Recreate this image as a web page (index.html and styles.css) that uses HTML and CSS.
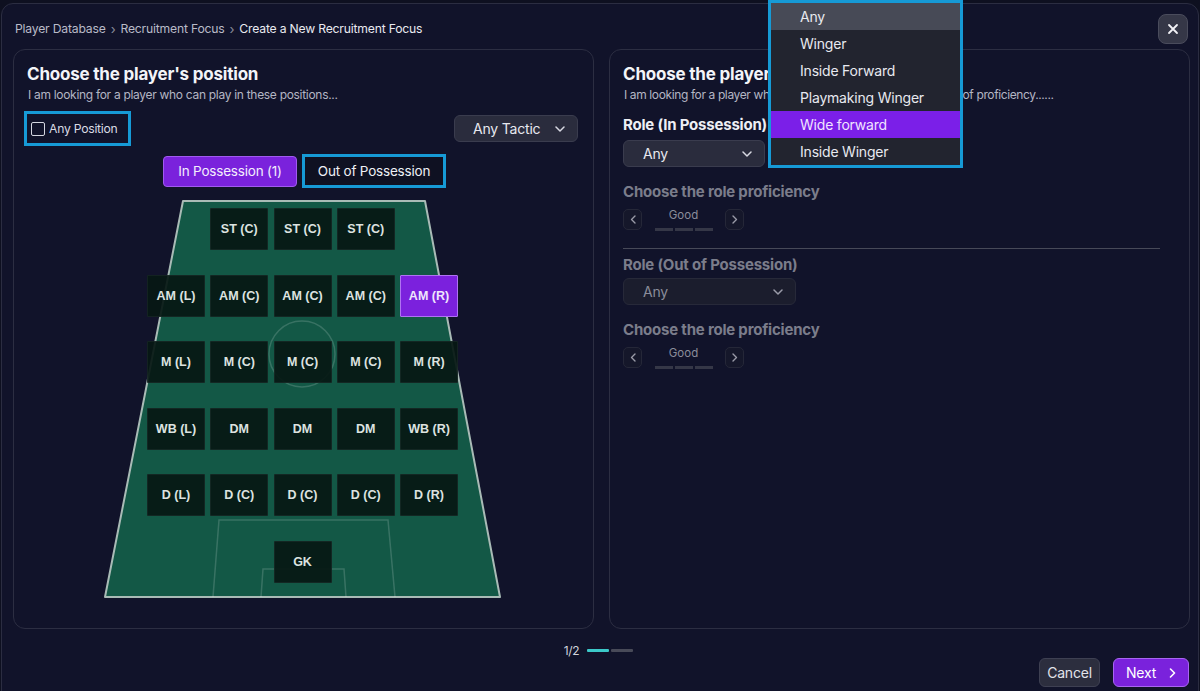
FILE: index.html
```html
<!DOCTYPE html>
<html lang="en">
<head>
<meta charset="utf-8">
<title>Create a New Recruitment Focus</title>
<link rel="stylesheet" href="styles.css">
</head>
<body>
<div class="modal">
  <header class="topbar">
    <nav class="crumbs">
      <span class="crumb">Player Database</span>
      <span class="sep">›</span>
      <span class="crumb">Recruitment Focus</span>
      <span class="sep">›</span>
      <span class="crumb current">Create a New Recruitment Focus</span>
    </nav>
    <button class="close" aria-label="Close">
      <svg width="12" height="12" viewBox="0 0 12 12"><path d="M2 2 L10 10 M10 2 L2 10" stroke="#f2f2f6" stroke-width="1.8" stroke-linecap="round"/></svg>
    </button>
  </header>

  <main class="panels">
    <section class="panel">
      <h2 class="title">Choose the player's position</h2>
      <p class="sub">I am looking for a player who can play in these positions...</p>
      <div class="filters">
        <label class="anypos hl"><span class="box"></span>Any Position</label>
        <button class="select tactic">Any Tactic
          <svg width="10" height="6" viewBox="0 0 10 6"><path d="M1 1 L5 5 L9 1" fill="none" stroke="#d8d9e2" stroke-width="1.5" stroke-linecap="round" stroke-linejoin="round"/></svg>
        </button>
      </div>
      <div class="tabs">
        <button class="tab active">In Possession (1)</button>
        <button class="tab hl">Out of Possession</button>
      </div>
      <div class="pitch">
        <svg class="pitch-lines" width="397" height="398" viewBox="0 0 397 398">
          <polygon points="79,1 321,1 396,397 1,397" fill="#135846" stroke="#a9bbb6" stroke-width="2" stroke-linejoin="round"/>
          <circle cx="198" cy="154" r="33" fill="none" stroke="rgba(255,255,255,0.16)" stroke-width="1.5"/>
          <polyline points="109,397 115,320 284,320 291,397" fill="none" stroke="rgba(255,255,255,0.16)" stroke-width="1.5"/>
          <polyline points="157,397 159,369 240,369 242,397" fill="none" stroke="rgba(255,255,255,0.16)" stroke-width="1.5"/>
        </svg>
        <div class="tiles">
          <div class="tile c2">ST (C)</div>
          <div class="tile">ST (C)</div>
          <div class="tile">ST (C)</div>

          <div class="tile c1">AM (L)</div>
          <div class="tile">AM (C)</div>
          <div class="tile">AM (C)</div>
          <div class="tile">AM (C)</div>
          <div class="tile sel">AM (R)</div>

          <div class="tile">M (L)</div>
          <div class="tile">M (C)</div>
          <div class="tile">M (C)</div>
          <div class="tile">M (C)</div>
          <div class="tile">M (R)</div>

          <div class="tile">WB (L)</div>
          <div class="tile">DM</div>
          <div class="tile">DM</div>
          <div class="tile">DM</div>
          <div class="tile">WB (R)</div>

          <div class="tile">D (L)</div>
          <div class="tile">D (C)</div>
          <div class="tile">D (C)</div>
          <div class="tile">D (C)</div>
          <div class="tile">D (R)</div>

          <div class="tile c3">GK</div>
        </div>
      </div>
    </section>

    <section class="panel">
      <h2 class="title">Choose the player's role</h2>
      <p class="sub tight">I am looking for a player who can play these roles with this level of proficiency......</p>

      <h3 class="label first">Role (In Possession)</h3>
      <button class="select role">Any
        <svg width="10" height="6" viewBox="0 0 10 6"><path d="M1 1 L5 5 L9 1" fill="none" stroke="#d8d9e2" stroke-width="1.5" stroke-linecap="round" stroke-linejoin="round"/></svg>
      </button>

      <h3 class="label dim">Choose the role proficiency</h3>
      <div class="stepper">
        <button class="step"><svg width="6" height="9" viewBox="0 0 6 9"><path d="M5 1 L1.5 4.5 L5 8" fill="none" stroke="#9a9ba8" stroke-width="1.4" stroke-linecap="round" stroke-linejoin="round"/></svg></button>
        <div class="level"><span>Good</span><div class="dashes"><i></i><i></i><i></i></div></div>
        <button class="step"><svg width="6" height="9" viewBox="0 0 6 9"><path d="M1 1 L4.5 4.5 L1 8" fill="none" stroke="#9a9ba8" stroke-width="1.4" stroke-linecap="round" stroke-linejoin="round"/></svg></button>
      </div>

      <hr class="divider">

      <h3 class="label dim top">Role (Out of Possession)</h3>
      <button class="select role wide dimsel">Any
        <svg width="10" height="6" viewBox="0 0 10 6"><path d="M1 1 L5 5 L9 1" fill="none" stroke="#9a9ba8" stroke-width="1.5" stroke-linecap="round" stroke-linejoin="round"/></svg>
      </button>

      <h3 class="label dim">Choose the role proficiency</h3>
      <div class="stepper">
        <button class="step"><svg width="6" height="9" viewBox="0 0 6 9"><path d="M5 1 L1.5 4.5 L5 8" fill="none" stroke="#9a9ba8" stroke-width="1.4" stroke-linecap="round" stroke-linejoin="round"/></svg></button>
        <div class="level"><span>Good</span><div class="dashes"><i></i><i></i><i></i></div></div>
        <button class="step"><svg width="6" height="9" viewBox="0 0 6 9"><path d="M1 1 L4.5 4.5 L1 8" fill="none" stroke="#9a9ba8" stroke-width="1.4" stroke-linecap="round" stroke-linejoin="round"/></svg></button>
      </div>
    </section>
  </main>

  <footer class="footer">
    <div class="pager">
      <span>1/2</span>
      <div class="bars"><i class="on"></i><i></i></div>
    </div>
    <div class="actions">
      <button class="btn cancel">Cancel</button>
      <button class="btn next">Next
        <svg width="7" height="10" viewBox="0 0 7 10"><path d="M1.5 1 L5.5 5 L1.5 9" fill="none" stroke="#ffffff" stroke-width="1.6" stroke-linecap="round" stroke-linejoin="round"/></svg>
      </button>
    </div>
  </footer>
</div>

<ul class="menu">
  <li class="hover">Any</li>
  <li>Winger</li>
  <li>Inside Forward</li>
  <li>Playmaking Winger</li>
  <li class="chosen">Wide forward</li>
  <li>Inside Winger</li>
</ul>
</body>
</html>
```

FILE: styles.css
```css
* { box-sizing: border-box; }

html, body {
  margin: 0;
  padding: 0;
  height: 100%;
  overflow: hidden;
}

body {
  background: #0e1020;
  font-family: Inter, "Noto Sans", "Liberation Sans", sans-serif;
  color: #eceef4;
  position: relative;
}

button {
  font-family: inherit;
  cursor: pointer;
}

.modal {
  margin: 3px 1px 0 1px;
  height: 720px;
  border: 1px solid #2b2d41;
  border-radius: 12px;
  background: #11132a;
}

/* top bar */
.topbar {
  display: flex;
  justify-content: space-between;
  align-items: center;
  padding: 4px 10px 0 13px;
  height: 45px;
}

.crumbs {
  display: flex;
  align-items: center;
  gap: 5px;
  font-size: 12.2px;
  letter-spacing: -0.2px;
}

.crumb { color: #b9bbc8; }
.crumb.current { color: #e9eaf0; }
.sep { color: #8a8c9a; font-size: 13px; }

.close {
  width: 30px;
  height: 30px;
  border-radius: 8px;
  border: 1px solid #4a4c5c;
  background: #353747;
  display: grid;
  place-items: center;
  padding: 0;
}

/* panels */
.panels {
  display: grid;
  grid-template-columns: 581px 581px;
  column-gap: 15px;
  padding: 0 0 0 11px;
}

.panel {
  height: 580px;
  border: 1px solid #2c2e42;
  border-radius: 12px;
  background: #11132a;
  padding: 14px 13px 0 13px;
  position: relative;
}

.title {
  margin: 0;
  font-size: 17px;
  line-height: 20px;
  font-weight: 700;
  color: #f3f4f8;
  letter-spacing: -0.2px;
}

.sub {
  margin: 3px 0 0 1px;
  font-size: 12px;
  line-height: 15px;
  color: #b4b6c4;
  letter-spacing: -0.3px;
  white-space: nowrap;
}

.sub.tight { letter-spacing: -0.38px; }

/* left filters */
.filters {
  display: flex;
  justify-content: space-between;
  align-items: center;
  margin: 9px 2px 0 -3px;
}

.hl {
  border: 3px solid #169ad6;
}

.anypos {
  display: flex;
  align-items: center;
  gap: 4px;
  width: 107px;
  height: 35px;
  padding-left: 4px;
  font-size: 12.2px;
  color: #d9dbe4;
  letter-spacing: -0.25px;
}

.box {
  width: 14px;
  height: 14px;
  border: 1.5px solid #d4d6e0;
  border-radius: 2px;
}

.select {
  display: flex;
  align-items: center;
  justify-content: space-between;
  height: 27px;
  border: 1px solid #3a3c4e;
  border-radius: 6px;
  background: #2a2c3d;
  color: #e7e8ef;
  font-size: 14px;
  letter-spacing: -0.2px;
}

.tactic {
  width: 124px;
  padding: 0 12px 0 18px;
}

/* tabs */
.tabs {
  display: flex;
  justify-content: center;
  align-items: center;
  gap: 5px;
  margin-top: 8px;
  padding-left: 2px;
}

.tab {
  height: 31px;
  border: 1px solid #a15af0;
  border-radius: 4px;
  background: #7a22dc;
  color: #f3eefc;
  font-size: 13.5px;
  letter-spacing: -0.2px;
  padding: 0;
  white-space: nowrap;
}

.tab.active { width: 134px; }

.tab.hl {
  height: 34px;
  width: 144px;
  border: 3px solid #169ad6;
  border-radius: 0;
  background: #0f1122;
  color: #eef0f5;
}

/* pitch */
.pitch {
  position: relative;
  width: 397px;
  height: 398px;
  margin: 12px auto 0;
  left: -1px;
  padding: 8px 43px 0 43px;
}

.pitch-lines {
  position: absolute;
  left: 0;
  top: 0;
}

.tiles {
  position: relative;
  display: grid;
  grid-template-columns: repeat(5, 58px);
  grid-auto-rows: 42px;
  column-gap: 5.25px;
  row-gap: 24.5px;
}

.tile {
  display: grid;
  place-items: center;
  background: rgba(6, 24, 19, 0.93);
  border: 1px solid rgba(255, 255, 255, 0.05);
  border-radius: 1px;
  font-family: "Liberation Sans", Arial, sans-serif;
  font-weight: 700;
  font-size: 12.5px;
  color: #dde3e0;
}

.tile.c1 { grid-column-start: 1; }
.tile.c2 { grid-column-start: 2; }
.tile.c3 { grid-column-start: 3; }

.tile.sel {
  background: #7b21dd;
  border: 1px solid #b072f3;
  color: #efe6fc;
}

/* right panel */
.label {
  margin: 0;
  font-size: 15px;
  line-height: 18px;
  font-weight: 700;
  letter-spacing: -0.2px;
  color: #eeeff4;
}

.label.first { margin-top: 14px; }
.label.dim { color: #7b7d8b; margin-top: 16px; }
.label.top { margin-top: 7px; }

.role {
  width: 142px;
  margin-top: 6px;
  padding: 0 12px 0 19px;
}

.role.wide {
  width: 173px;
  margin-top: 4px;
}

.dimsel {
  background: #1b1d2d;
  border-color: #272939;
  color: #8a8c9a;
}

.stepper {
  display: flex;
  align-items: flex-start;
  gap: 12px;
  margin-top: 8px;
}

.step {
  width: 19px;
  height: 21px;
  border: 1px solid #252738;
  border-radius: 5px;
  background: #15172a;
  display: grid;
  place-items: center;
  padding: 0;
}

.level {
  display: flex;
  flex-direction: column;
  align-items: center;
  width: 59px;
}

.level span {
  font-size: 11.5px;
  line-height: 13px;
  color: #8b8d9a;
}

.dashes {
  display: flex;
  gap: 2px;
  margin-top: 6px;
}

.dashes i {
  width: 18px;
  height: 3px;
  background: #353747;
}

.divider {
  margin: 17px 0 0 0;
  width: 537px;
  border: 0;
  border-top: 1px solid #474958;
}

/* footer */
.footer {
  display: grid;
  grid-template-columns: 1fr auto 1fr;
  padding: 0 9px 0 0;
  height: 60px;
}

.pager {
  grid-column: 2;
  display: flex;
  align-items: center;
  gap: 8px;
  margin-top: 14px;
  height: 15px;
  font-size: 12px;
  color: #d2d4dc;
  letter-spacing: -0.3px;
  padding-left: 6px;
}

.bars {
  display: flex;
  gap: 2px;
}

.bars i {
  width: 22px;
  height: 3px;
  background: #484a58;
  border-radius: 1px;
}

.bars i.on { background: #3cc9c9; }

.actions {
  grid-column: 3;
  justify-self: end;
  align-self: end;
  display: flex;
  gap: 13px;
  margin-bottom: 2px;
}

.btn {
  height: 29px;
  border-radius: 6px;
  font-size: 14px;
  letter-spacing: -0.2px;
  display: flex;
  align-items: center;
}

.cancel {
  width: 61px;
  justify-content: center;
  background: #2c2e3e;
  border: 1px solid #3e4052;
  color: #e2e3ea;
}

.next {
  width: 76px;
  padding: 0 0 0 12px;
  gap: 13px;
  background: #7a22dc;
  border: 1px solid #a865f2;
  color: #ffffff;
}

/* open dropdown overlay */
.menu {
  position: absolute;
  left: 768px;
  top: 0;
  width: 195px;
  height: 168px;
  margin: 0;
  padding: 0;
  list-style: none;
  border: 3px solid #169ad6;
  background: #22242f;
  overflow: hidden;
}

.menu li {
  height: 27px;
  padding-left: 29px;
  display: flex;
  align-items: center;
  font-size: 14px;
  letter-spacing: -0.2px;
  color: #e8e9ef;
}

.menu li.hover { background: #474a56; }
.menu li.chosen { background: #7b1fe8; color: #f0e4ff; }
```
